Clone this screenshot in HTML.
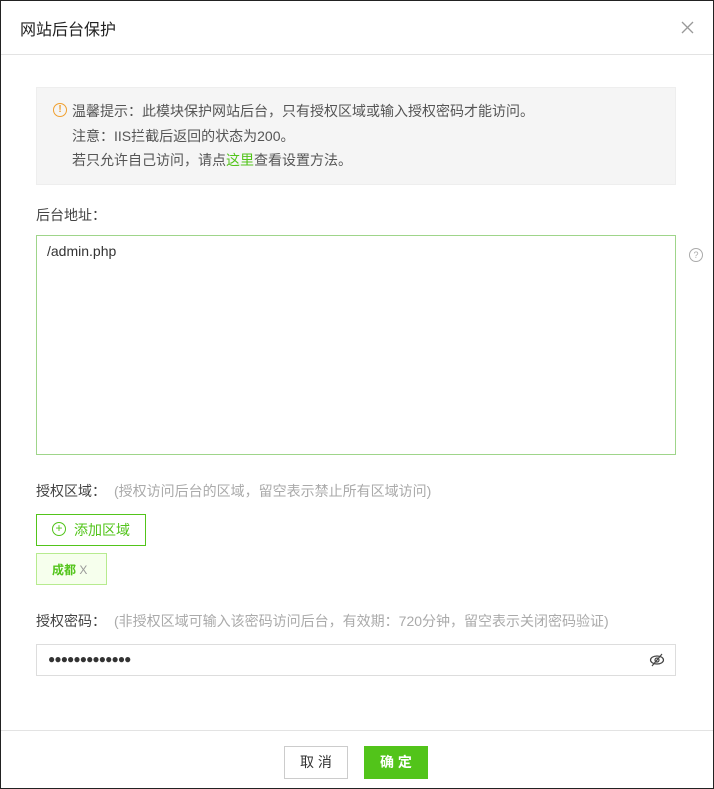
<!DOCTYPE html>
<html><head><meta charset="utf-8"><style>
*{box-sizing:border-box;margin:0;padding:0}
body{width:714px;height:789px;background:#fff;font-family:"Liberation Sans","Noto Sans CJK SC",sans-serif;overflow:hidden;position:relative;}
.abs{position:absolute}
.t{font-size:14px;color:#555;}
.g{color:#aaa;margin-left:8px}
</style></head><body>
<div class="abs" style="left:0;top:0;width:714px;height:789px;border:1px solid #222"></div>
<div class="abs" style="left:20px;top:16px;font-size:16px;color:#222">网站后台保护</div>
<svg class="abs" style="left:681px;top:21px" width="13" height="13" viewBox="0 0 13 13"><path d="M1 1L12 12M12 1L1 12" stroke="#999" stroke-width="1.3"/></svg>
<div class="abs" style="left:1px;top:54px;width:712px;height:1px;background:#e3e3e3"></div>

<div class="abs" style="left:36px;top:87px;width:640px;height:98px;background:#f5f5f5;border:1px solid #eee"></div>
<div class="abs" style="left:53px;top:103px;width:14px;height:14px;border:1.3px solid #f0a030;border-radius:50%;color:#f0a030;font-size:10px;line-height:11px;text-align:center;font-weight:bold">!</div>
<div class="abs t" style="left:72px;top:99px;line-height:24.5px">温馨提示：此模块保护网站后台，只有授权区域或输入授权密码才能访问。<br>注意：IIS拦截后返回的状态为200。<br>若只允许自己访问，请点<span style="color:#52c41a">这里</span>查看设置方法。</div>

<div class="abs t" style="left:36px;top:205px;color:#444">后台地址：</div>
<div class="abs" style="left:36px;top:235px;width:640px;height:220px;border:1px solid #9fd58a"></div>
<div class="abs" style="left:47px;top:243px;font-size:14px;color:#333">/admin.php</div>
<div class="abs" style="left:689px;top:248px;width:14px;height:14px;border:1px solid #aaa;border-radius:50%;font-size:9px;color:#aaa;text-align:center;line-height:12px">?</div>

<div class="abs t" style="left:36px;top:481px;color:#444">授权区域：<span class="g">(授权访问后台的区域，留空表示禁止所有区域访问)</span></div>
<div class="abs" style="left:36px;top:514px;width:110px;height:32px;border:1px solid #52c41a;"></div>
<div class="abs" style="left:52px;top:522px;width:14px;height:14px;border:1.3px solid #52c41a;border-radius:50%;color:#52c41a;font-size:12px;line-height:11px;text-align:center">+</div>
<div class="abs" style="left:74px;top:520px;font-size:14px;color:#52c41a">添加区域</div>
<div class="abs" style="left:36px;top:553px;width:71px;height:32px;border:1px solid #b7eb8f;background:#f6ffed"></div>
<div class="abs" style="left:52px;top:561px;font-size:12px;color:#52c41a;font-weight:bold">成都 <span style="color:#999;font-weight:normal">X</span></div>

<div class="abs t" style="left:36px;top:611px;color:#444">授权密码：<span class="g">(非授权区域可输入该密码访问后台，有效期：720分钟，留空表示关闭密码验证)</span></div>
<div class="abs" style="left:36px;top:644px;width:640px;height:32px;border:1px solid #ddd"></div>
<div class="abs" style="left:48px;top:652px;font-size:12px;color:#333;letter-spacing:-0.9px">●●●●●●●●●●●●●</div>
<svg class="abs" style="left:649px;top:653px" width="16" height="14" viewBox="0 0 16 14"><ellipse cx="8" cy="7" rx="6.5" ry="4" fill="none" stroke="#444" stroke-width="1.2"/><circle cx="8" cy="7" r="2" fill="none" stroke="#444" stroke-width="1.2"/><line x1="3" y1="13" x2="13" y2="1" stroke="#444" stroke-width="1.2"/></svg>

<div class="abs" style="left:1px;top:730px;width:712px;height:1px;background:#e3e3e3"></div>
<div class="abs" style="left:284px;top:746px;width:64px;height:33px;border:1px solid #ccc;font-size:14px;color:#333;text-align:center;line-height:31px">取 消</div>
<div class="abs" style="left:364px;top:746px;width:64px;height:33px;background:#52c41a;font-size:14px;color:#fff;text-align:center;line-height:33px;font-weight:bold">确 定</div>
</body></html>
